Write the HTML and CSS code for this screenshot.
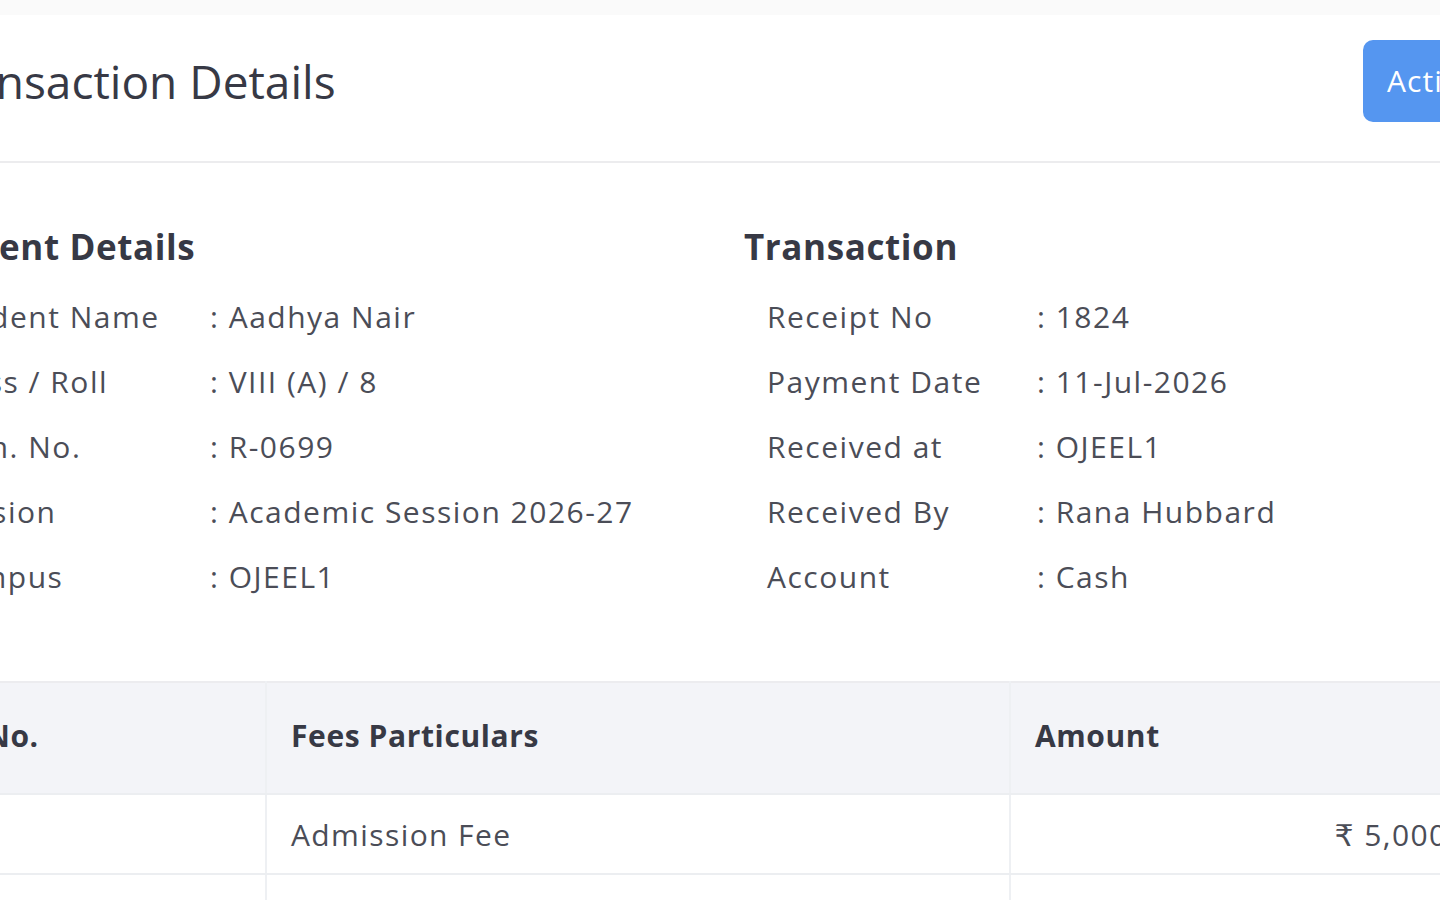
FILE: index.html
```html
<!DOCTYPE html>
<html lang="en">
<head>
  <meta charset="UTF-8" />
  <meta name="viewport" content="width=device-width, initial-scale=1.0">
  <title>Transaction Details</title>
  <link rel="stylesheet" href="styles.css">
</head>
<body>

  <div class="page">
    <div class="card">

      <!-- Header -->
      <div class="card-header">
        <h1 class="title">Transaction Details</h1>
        <button class="btn-action">Action &#9662;</button>
      </div>

      <div class="card-body">
        <div class="info-grid">

          <!-- Student -->
          <div class="info-block">
            <h2>Student Details</h2>
            <div class="info-row"><span class="label">Student Name</span><span class="value">: Aadhya Nair</span></div>
            <div class="info-row"><span class="label">Class / Roll</span><span class="value">: VIII (A) / 8</span></div>
            <div class="info-row"><span class="label">Adm. No.</span><span class="value">: R-0699</span></div>
            <div class="info-row"><span class="label">Session</span><span class="value">: Academic Session 2026-27</span></div>
            <div class="info-row"><span class="label">Campus</span><span class="value">: OJEEL1</span></div>
          </div>

          <!-- Transaction -->
          <div class="info-block">
            <h2>Transaction</h2>
            <div class="info-row"><span class="label">Receipt No</span><span class="value">: 1824</span></div>
            <div class="info-row"><span class="label">Payment Date</span><span class="value">: 11-Jul-2026</span></div>
            <div class="info-row"><span class="label">Received at</span><span class="value">: OJEEL1</span></div>
            <div class="info-row"><span class="label">Received By</span><span class="value">: Rana Hubbard</span></div>
            <div class="info-row"><span class="label">Account</span><span class="value">: Cash</span></div>
          </div>

        </div>

        <table class="fees">
          <thead>
            <tr>
              <th class="col-no">Sl. No.</th>
              <th class="col-name">Fees Particulars</th>
              <th class="col-amt">Amount</th>
            </tr>
          </thead>
          <tbody>
            <tr>
              <td>1</td>
              <td>Admission Fee</td>
              <td class="amt">&#8377; 5,000.00</td>
            </tr>
            <tr>
              <td>2</td>
              <td>Tuition Fee</td>
              <td class="amt">&#8377; 2,500.00</td>
            </tr>
          </tbody>
        </table>
      </div>

    </div>
  </div>

</body>
</html>
```

FILE: styles.css
```css
html, body {
  margin: 0;
  overflow: hidden;
}
body {
  font-family: 'Open Sans', 'DejaVu Sans', sans-serif;
  background: #fff;
  color: #4b4d57;
  font-size: 30px;
}
.page {
  margin-left: -107px;
  width: 1700px;
}
.card {
  background: #fff;
}
.card-header {
  display: flex;
  justify-content: space-between;
  align-items: center;
  height: 163px;
  box-sizing: border-box;
  padding: 0 24px 0 33px;
  border-bottom: 2px solid #ececee;
  background: linear-gradient(#fafafa 15px, #fff 15px);
}
.title {
  margin: 0;
  font-size: 46px;
  font-weight: 500;
  color: #373945;
}
.btn-action {
  margin-right: 39px;
  height: 82px;
  padding: 0 24px;
  border: none;
  border-radius: 10px;
  background: #5596f0;
  color: #fff;
  font-family: inherit;
  font-size: 30px;
  letter-spacing: 1px;
}
.card-body {
  padding: 60px 24px 0;
}
.info-grid {
  display: grid;
  grid-template-columns: 777px 1fr;
  column-gap: 50px;
}
.info-block h2 {
  margin: 0 0 14px;
  font-size: 35px;
  font-weight: 700;
  color: #373945;
  letter-spacing: 0.6px;
}
.info-row {
  display: flex;
  height: 65px;
  align-items: center;
  padding-left: 23px;
  letter-spacing: 1.5px;
}
.label {
  width: 270px;
  flex-shrink: 0;
}
.fees {
  margin-top: 72px;
  width: 1603px;
  border-collapse: collapse;
  border-top: 2px solid #ececef;
}
.fees th, .fees td {
  text-align: left;
  padding: 0 24px;
  border-right: 2px solid #eef0f3;
  border-bottom: 2px solid #eceef1;
}
.fees th {
  height: 104px;
  padding-bottom: 6px;
  background: #f3f4f8;
  font-weight: 700;
  color: #373945;
  letter-spacing: 0.6px;
}
.fees td {
  height: 78px;
  letter-spacing: 1.4px;
}
.col-no { width: 300px; }
.col-name { width: 694px; }
.fees .amt {
  text-align: right;
}
```
